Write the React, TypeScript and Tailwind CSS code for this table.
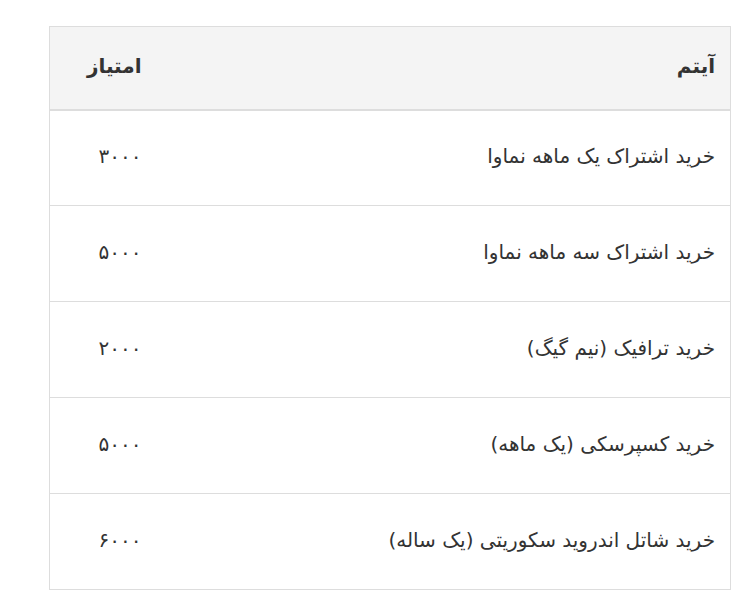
const rows = [
  { item: "خرید اشتراک یک ماهه نماوا", score: "۳۰۰۰" },
  { item: "خرید اشتراک سه ماهه نماوا", score: "۵۰۰۰" },
  { item: "خرید ترافیک (نیم گیگ)", score: "۲۰۰۰" },
  { item: "خرید کسپرسکی (یک ماهه)", score: "۵۰۰۰" },
  { item: "خرید شاتل اندروید سکوریتی (یک ساله)", score: "۶۰۰۰" },
];

export default function App() {
  return (
    <div className="min-h-[610px] bg-white pt-[26px] pl-[49px]" style={{ fontFamily: '"DejaVu Sans", "Noto Sans", sans-serif' }}>
      <table dir="rtl" className="w-[682px] border-collapse border border-[#dddddd] text-[20px] text-[#333333]">
        <thead>
          <tr className="h-[83px] bg-[#f4f4f4]">
            <th className="border-b-2 border-[#dddddd] pr-[15px] pb-1 text-right font-bold">آیتم</th>
            <th className="w-[107px] border-b-2 border-[#dddddd] pr-[15px] pb-1 text-right font-bold">امتیاز</th>
          </tr>
        </thead>
        <tbody>
          {rows.map((r) => (
            <tr key={r.item} className="h-[96px] border-t border-[#dddddd]">
              <td className="pr-[15px] pb-1 text-right">{r.item}</td>
              <td className="pr-[15px] pb-1 text-right">{r.score}</td>
            </tr>
          ))}
        </tbody>
      </table>
    </div>
  );
}
